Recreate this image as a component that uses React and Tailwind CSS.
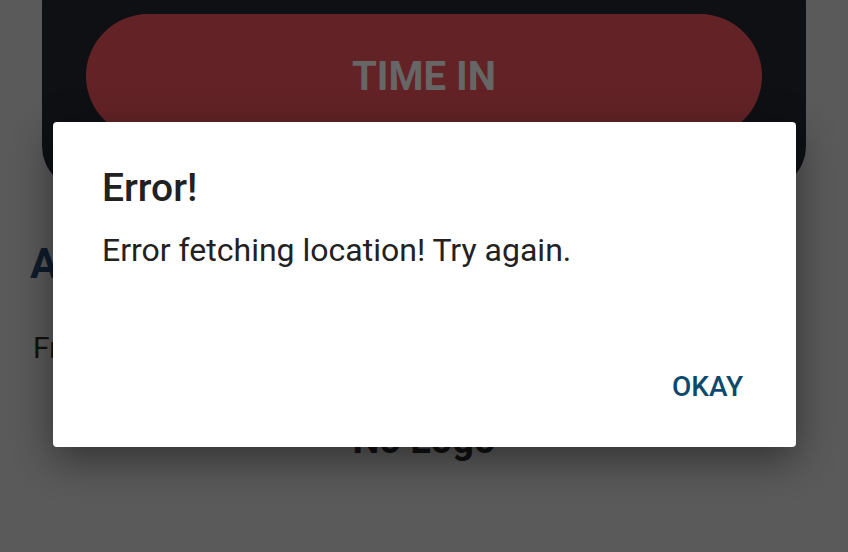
export default function App() {
  return (
    <div
      className="relative w-[848px] h-[552px] overflow-hidden bg-[#5a5a5a]"
      style={{ fontFamily: "Roboto, 'Noto Sans', sans-serif" }}
    >
      {/* dimmed page underneath */}
      <div className="flex flex-col">
        <div className="mx-[42px] -mt-[40px] pt-[54px] pb-[52px] rounded-[44px] bg-[#0e1014]">
          <div className="mx-[44px] h-[124px] rounded-full bg-[#632326] flex items-center justify-center">
            <span className="mt-[2px] text-[40px] leading-none font-bold text-[#666666]">TIME IN</span>
          </div>
        </div>
        <div className="pl-[30px] mt-[53px] text-[42px] leading-none font-bold text-[#0f1c2b] whitespace-nowrap">
          Attendance
        </div>
        <div className="pl-[33px] mt-[48px] text-[30px] leading-none text-[#111111] whitespace-nowrap">
          From: Today
        </div>
        <div className="mt-[58px] text-[38px] leading-none font-bold text-[#111111] text-center">
          No Logo
        </div>
      </div>

      {/* dialog */}
      <div className="absolute left-[53px] top-[122px] w-[743px] h-[325px] rounded-[4px] bg-white shadow-[0_12px_40px_rgba(0,0,0,0.45)] flex flex-col px-[49px] pt-[47px] pb-[46px]">
        <div className="text-[39px] leading-none font-medium text-[#212121]">Error!</div>
        <div className="mt-[26px] text-[32px] leading-none text-[#222222]">
          Error fetching location! Try again.
        </div>
        <div className="mt-auto flex justify-end mr-[4px]">
          <span className="text-[28px] leading-none font-medium text-[#0b4a6b]">OKAY</span>
        </div>
      </div>
    </div>
  );
}
